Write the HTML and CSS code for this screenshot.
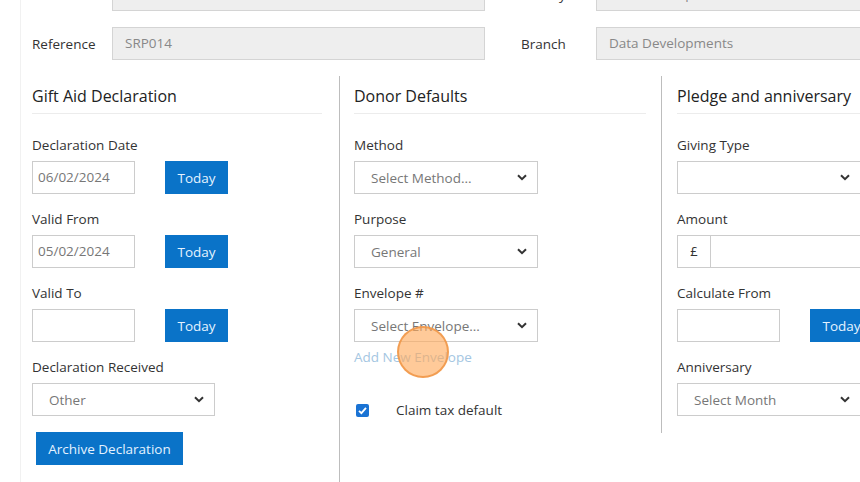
FILE: index.html
```html
<!DOCTYPE html>
<html>
<head>
<meta charset="utf-8">
<link rel="stylesheet" href="styles.css">
</head>
<body>
<div class="panel">
  <div class="top">
    <div class="top-row">
      <span class="top-label">Name</span>
      <div class="ro">Mr Simon Reeves</div>
      <span class="top-label">Charity</span>
      <div class="ro ro-wide">Data Developments</div>
    </div>
    <div class="top-row">
      <span class="top-label">Reference</span>
      <div class="ro">SRP014</div>
      <span class="top-label">Branch</span>
      <div class="ro ro-wide">Data Developments</div>
    </div>
  </div>

  <div class="cols">
    <section class="col col-1">
      <h2 class="col-title">Gift Aid Declaration</h2>
      <div class="field">
        <label class="lbl">Declaration Date</label>
        <div class="date-row">
          <div class="inp inp-date">06/02/2024</div>
          <button class="btn">Today</button>
        </div>
      </div>
      <div class="field">
        <label class="lbl">Valid From</label>
        <div class="date-row">
          <div class="inp inp-date">05/02/2024</div>
          <button class="btn">Today</button>
        </div>
      </div>
      <div class="field">
        <label class="lbl">Valid To</label>
        <div class="date-row">
          <div class="inp inp-date"></div>
          <button class="btn">Today</button>
        </div>
      </div>
      <div class="field">
        <label class="lbl">Declaration Received</label>
        <div class="sel sel-182"><span>Other</span>
          <svg class="chev" viewBox="0 0 10 7" width="10" height="7"><path d="M1 1.2 L5 5.2 L9 1.2" fill="none" stroke="#333" stroke-width="2"/></svg>
        </div>
      </div>
      <button class="btn btn-archive">Archive Declaration</button>
    </section>

    <section class="col col-2">
      <h2 class="col-title">Donor Defaults</h2>
      <div class="field">
        <label class="lbl">Method</label>
        <div class="sel sel-184"><span>Select Method...</span>
          <svg class="chev" viewBox="0 0 10 7" width="10" height="7"><path d="M1 1.2 L5 5.2 L9 1.2" fill="none" stroke="#333" stroke-width="2"/></svg>
        </div>
      </div>
      <div class="field">
        <label class="lbl">Purpose</label>
        <div class="sel sel-184"><span>General</span>
          <svg class="chev" viewBox="0 0 10 7" width="10" height="7"><path d="M1 1.2 L5 5.2 L9 1.2" fill="none" stroke="#333" stroke-width="2"/></svg>
        </div>
      </div>
      <div class="field field-env">
        <label class="lbl">Envelope #</label>
        <div class="sel sel-184"><span>Select Envelope...</span>
          <svg class="chev" viewBox="0 0 10 7" width="10" height="7"><path d="M1 1.2 L5 5.2 L9 1.2" fill="none" stroke="#333" stroke-width="2"/></svg>
        </div>
        <a class="link">Add New Envelope</a>
      </div>
      <div class="check-row">
        <svg class="cb" viewBox="0 0 13 13" width="13" height="13"><rect x="0" y="0" width="13" height="13" rx="2" fill="#1a73d4"/><path d="M3 6.8 L5.4 9.2 L10 3.8" fill="none" stroke="#fff" stroke-width="1.8"/></svg>
        <span class="check-text">Claim tax default</span>
      </div>
      <div class="cursor"></div>
    </section>

    <section class="col col-3">
      <h2 class="col-title">Pledge and anniversary</h2>
      <div class="field">
        <label class="lbl">Giving Type</label>
        <div class="sel sel-184"><span></span>
          <svg class="chev" viewBox="0 0 10 7" width="10" height="7"><path d="M1 1.2 L5 5.2 L9 1.2" fill="none" stroke="#333" stroke-width="2"/></svg>
        </div>
      </div>
      <div class="field">
        <label class="lbl">Amount</label>
        <div class="group">
          <span class="addon">£</span>
          <div class="inp inp-grow"></div>
        </div>
      </div>
      <div class="field">
        <label class="lbl">Calculate From</label>
        <div class="date-row">
          <div class="inp inp-date"></div>
          <button class="btn">Today</button>
        </div>
      </div>
      <div class="field">
        <label class="lbl">Anniversary</label>
        <div class="sel sel-184"><span>Select Month</span>
          <svg class="chev" viewBox="0 0 10 7" width="10" height="7"><path d="M1 1.2 L5 5.2 L9 1.2" fill="none" stroke="#333" stroke-width="2"/></svg>
        </div>
      </div>
    </section>
  </div>
</div>
</body>
</html>
```

FILE: styles.css
```css
* { box-sizing: border-box; }
html, body { margin: 0; padding: 0; }
body {
  width: 860px;
  height: 482px;
  overflow: hidden;
  background: #fff;
  font-family: "Open Sans", "Liberation Sans", sans-serif;
  font-size: 13px;
  color: #333;
}
.panel {
  display: flow-root;
  margin-left: 20px;
  border-left: 1px solid #f1f1f1;
  padding-left: 11px;
  height: 482px;
  width: 900px;
}
.top {
  margin-top: -22px;
  display: flex;
  flex-direction: column;
  gap: 16px;
}
.top-row {
  display: grid;
  grid-template-columns: 80px 373px 36px 75px 300px;
  align-items: center;
}
.top-row .top-label:nth-of-type(2) { grid-column: 4; }
.top-label { font-size: 13.5px; color: #333; }
.ro {
  height: 33px;
  background: #eee;
  border: 1px solid #d4d4d4;
  color: #888;
  padding: 0 12px;
  line-height: 31px;
  font-size: 13.5px;
}
.cols {
  margin-top: 16px;
  display: grid;
  grid-template-columns: 307px 322px 240px;
  align-items: start;
}
.col { position: relative; }
.col-1 { padding-right: 17px; }
.col-2 {
  border-left: 1px solid #bdbdbd;
  padding-left: 14px;
  padding-right: 15px;
  height: 420px;
}
.col-3 {
  border-left: 1px solid #bdbdbd;
  padding-left: 15px;
  padding-bottom: 17px;
}
.col-title {
  margin: 0;
  padding-top: 8px;
  padding-bottom: 5px;
  line-height: 24px;
  font-size: 16px;
  font-weight: 400;
  color: #222;
  border-bottom: 1px solid #ececec;
  white-space: nowrap;
}
.col-3 .col-title { margin-right: -20px; }
.field { display: flex; flex-direction: column; }
.col-title + .field { margin-top: 21px; }
.field + .field { margin-top: 15px; }
.lbl {
  display: block;
  line-height: 20px;
  font-size: 13.5px;
  color: #333;
  margin-bottom: 6px;
  white-space: nowrap;
}
.date-row { display: flex; gap: 30px; align-items: center; }
.inp {
  height: 33px;
  border: 1px solid #ccc;
  background: #fff;
  color: #777;
  padding: 0 5px;
  line-height: 31px;
  font-size: 13.5px;
}
.inp-date { width: 103px; }
.btn {
  height: 33px;
  width: 63px;
  border: none;
  background: #0a73c8;
  color: #e4f2ff;
  font-family: inherit;
  font-size: 13.5px;
  padding: 0;
}
.btn-archive {
  margin-top: 16px;
  margin-left: 4px;
  width: 147px;
}
.sel {
  height: 33px;
  border: 1px solid #ccc;
  background: #fff;
  display: flex;
  align-items: center;
  justify-content: space-between;
  padding: 0 10px 0 16px;
  color: #777;
  font-size: 13.5px;
}
.sel-182 { width: 183px; }
.sel-184 { width: 184px; }
.chev { display: block; }
.link {
  margin-top: 5px;
  line-height: 20px;
  font-size: 13.5px;
  color: #a4c6e2;
}
.check-row {
  margin-top: 33px;
  display: flex;
  align-items: center;
  height: 20px;
  padding-left: 2px;
}
.cb { display: block; }
.check-text { margin-left: 27px; font-size: 13.5px; color: #333; }
.group { display: flex; width: 200px; }
.addon {
  width: 33px;
  height: 33px;
  border: 1px solid #ccc;
  border-right: none;
  background: #fff;
  text-align: center;
  line-height: 31px;
  font-size: 13px;
  color: #333;
}
.inp-grow { flex: 1; }
.cursor {
  position: absolute;
  left: 57px;
  top: 250px;
  width: 52px;
  height: 52px;
  border-radius: 50%;
  background: rgba(255, 170, 90, 0.62);
  border: 2px solid rgba(240, 150, 70, 0.85);
}
```
